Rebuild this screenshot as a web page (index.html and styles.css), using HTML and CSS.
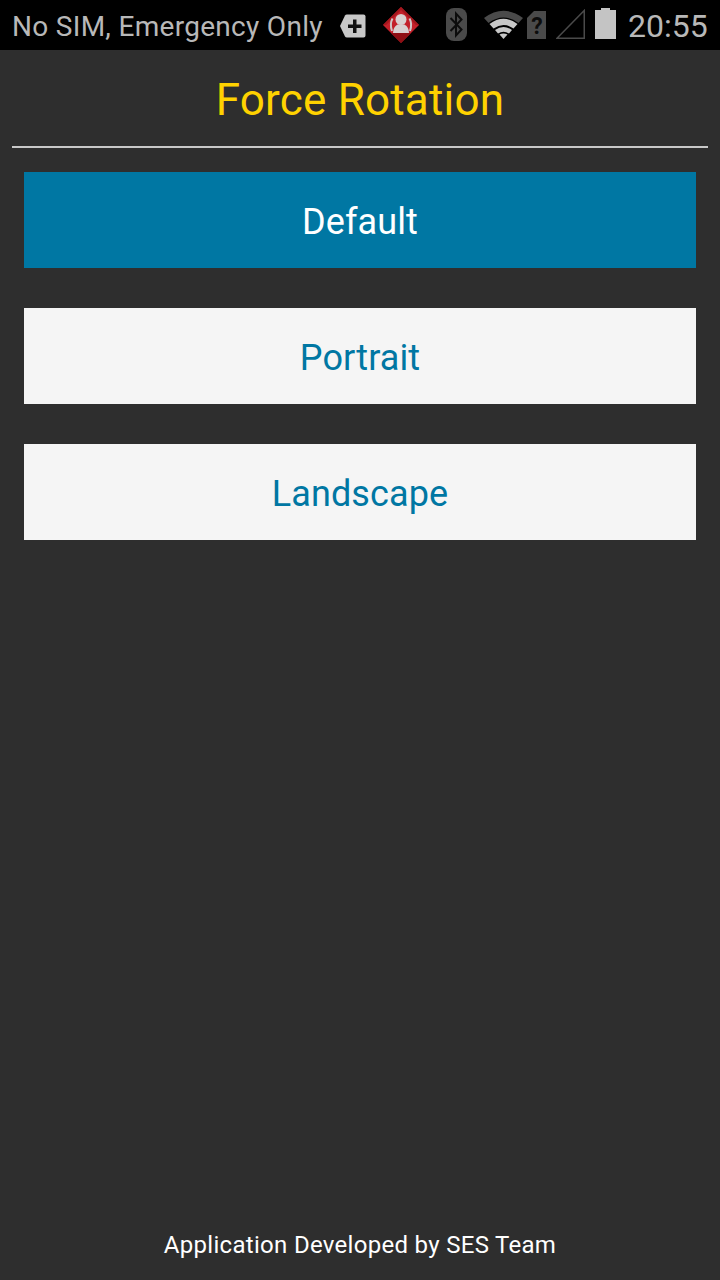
FILE: index.html
```html
<!DOCTYPE html>
<html lang="en">
<head>
  <meta charset="UTF-8">
  <meta name="viewport" content="width=device-width, initial-scale=1.0">
  <title>Force Rotation</title>
  <link rel="stylesheet" href="styles.css">
</head>
<body>
  <div class="statusbar">
    <span class="carrier">No SIM, Emergency Only</span>
    <svg class="icon plus" width="26" height="24" viewBox="0 0 26 24">
      <path d="M0 12 L5 1.500 Q5.500 0.500 7 0.500 H23.500 Q25.500 0.500 25.500 2.500 V21.500 Q25.500 23.500 23.500 23.500 H7 Q5.500 23.500 5 22.500 Z" fill="#c8c8c8"/>
      <path d="M13 5.500 h3.500 v5 h5 v3.500 h-5 v5 h-3.500 v-5 h-5 v-3.500 h5 Z" fill="#111"/>
    </svg>
    <svg class="icon diamond" width="36" height="36" viewBox="0 0 36 36">
      <path d="M18 0 L36 18 L18 36 L0 18 Z" fill="#c3202a"/>
      <path d="M8 26 H28 L18 36 Z" fill="#8f0f14"/>
      <path d="M18 0 L36 18 L33 18 L18 3 L3 18 L0 18 Z" fill="#a5161d"/>
      <path d="M9 24 Q6.500 17 9.500 11.500 M27 24 Q29.500 17 26.500 11.500" fill="none" stroke="#cfc6c6" stroke-width="2"/>
      <circle cx="18" cy="12.500" r="5.500" fill="#d8d0d0"/>
      <path d="M10 26 Q10 20 14.500 17.500 H21.500 Q26 20 26 26 Z" fill="#d8d0d0"/>
    </svg>
    <svg class="icon bluetooth" width="21" height="33" viewBox="0 0 21 33">
      <rect width="21" height="33" rx="8" fill="#4a4a4a"/>
      <path d="M4.500 10 L15.500 21.500 L10 27.500 V5.500 L15.500 11.500 L4.500 23" fill="none" stroke="#0c0c0c" stroke-width="2"/>
    </svg>
    <svg class="icon wifi" width="39" height="30" viewBox="0 0 39 30">
      <path d="M0 9 Q19.500 -5.500 39 9 L34.500 14 Q19.500 3 4.500 14 Z" fill="#4a4a4a"/>
      <path d="M5.500 15 Q19.500 4.500 33.500 15 L29.500 19.500 Q19.500 12.500 9.500 19.500 Z" fill="#c8c8c8"/>
      <path d="M11 21 Q19.500 15 28 21 L25 24.500 Q19.500 21 14 24.500 Z" fill="#c8c8c8"/>
      <path d="M15.500 25.500 Q19.500 23.500 23.500 25.500 L19.500 30 Z" fill="#c8c8c8"/>
    </svg>
    <svg class="icon sim" width="19" height="28" viewBox="0 0 19 28">
      <path d="M7 0 H19 V28 H0 V7 Z" fill="#4a4a4a"/>
      <text x="10" y="22.500" text-anchor="middle" class="sim-mark">?</text>
    </svg>
    <svg class="icon signal" width="29" height="30" viewBox="0 0 29 30">
      <path d="M1 29.250 L28.250 1.500 V29.250 Z" fill="none" stroke="#4a4a4a" stroke-width="1.500"/>
    </svg>
    <svg class="icon battery" width="21" height="31" viewBox="0 0 21 31">
      <path d="M6 0 H15 V2 H21 V31 H0 V2 H6 Z" fill="#c4c4c4"/>
    </svg>
    <span class="clock">20:55</span>
  </div>

  <main class="screen">
    <h1 class="title">Force Rotation</h1>
    <div class="divider"></div>
    <div class="options">
      <div class="option selected">Default</div>
      <div class="option">Portrait</div>
      <div class="option">Landscape</div>
    </div>
    <p class="credit">Application Developed by SES Team</p>
  </main>
</body>
</html>
```

FILE: styles.css
```css
html, body {
  height: 100%;
}
body {
  margin: 0;
  display: flex;
  flex-direction: column;
  background-color: #2e2e2e;
  font-family: Roboto, sans-serif;
}
.statusbar {
  height: 50px;
  flex: none;
  display: flex;
  align-items: center;
  background-color: #000;
  color: #b8b8b8;
  padding: 0 12px;
  overflow: hidden;
}
.carrier {
  width: 311px;
  flex: none;
  font-size: 28px;
  letter-spacing: 0.3px;
  white-space: nowrap;
  margin-top: 3px;
}
.icon {
  flex: none;
}
.plus {
  margin-left: 17px;
  margin-top: 2px;
}
.diamond {
  margin-left: 17px;
}
.bluetooth {
  margin-left: 27px;
  margin-top: -1px;
}
.wifi {
  margin-left: 17px;
  margin-top: -2px;
}
.sim {
  margin-left: 4px;
}
.sim-mark {
  font-family: Roboto, sans-serif;
  font-weight: bold;
  font-size: 23px;
  fill: #0c0c0c;
}
.signal {
  margin-left: 10px;
  margin-top: -2px;
}
.battery {
  margin-left: 10px;
  margin-top: -3px;
}
.clock {
  font-size: 32px;
  margin-left: 12px;
  margin-top: 2px;
}
.screen {
  flex: 1;
  display: flex;
  flex-direction: column;
  padding: 0 12px;
}
.title {
  margin: 0;
  height: 96px;
  line-height: 100px;
  text-align: center;
  font-size: 44px;
  letter-spacing: 0.2px;
  font-weight: normal;
  color: #ffd200;
}
.divider {
  height: 2px;
  background-color: #c8c8c8;
}
.options {
  display: flex;
  flex-direction: column;
  gap: 40px;
  padding: 24px 12px 0;
}
.option {
  height: 96px;
  line-height: 100px;
  text-align: center;
  font-size: 36px;
  letter-spacing: 0.1px;
  background-color: #f5f5f5;
  color: #0077a3;
}
.option.selected {
  background-color: #0077a3;
  color: #fff;
}
.credit {
  margin: auto 0 0;
  height: 70px;
  line-height: 71px;
  text-align: center;
  font-size: 24px;
  letter-spacing: 0.3px;
  color: #fff;
}
```
